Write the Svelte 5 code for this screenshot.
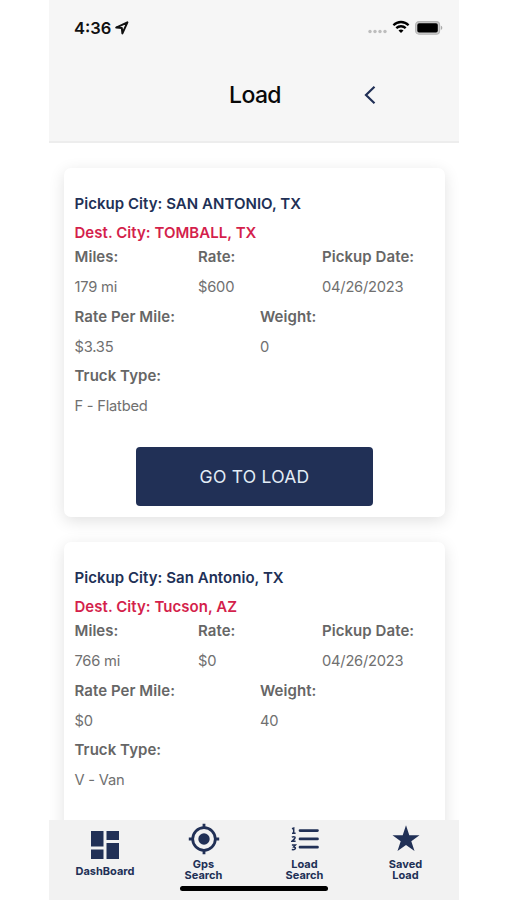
<script lang="ts">
	interface Load {
		pickup: string;
		destination: string;
		miles: string;
		rate: string;
		date: string;
		ratePerMile: string;
		weight: string;
		truck: string;
	}

	const loads: Load[] = [
		{
			pickup: 'SAN ANTONIO, TX',
			destination: 'TOMBALL, TX',
			miles: '179 mi',
			rate: '$600',
			date: '04/26/2023',
			ratePerMile: '$3.35',
			weight: '0',
			truck: 'F - Flatbed'
		},
		{
			pickup: 'San Antonio, TX',
			destination: 'Tucson, AZ',
			miles: '766 mi',
			rate: '$0',
			date: '04/26/2023',
			ratePerMile: '$0',
			weight: '40',
			truck: 'V - Van'
		}
	];
</script>

<div class="phone">
	<header>
		<div class="status-bar">
			<span class="time">4:36</span>
			<svg class="location" width="14" height="14" viewBox="0 0 14 14">
				<path d="M1.2 6.6 12.4 1.4 7.4 12.4 6.8 6.9Z" fill="none" stroke="#111" stroke-width="2" stroke-linejoin="round" />
			</svg>
			<div class="status-icons">
				<svg width="19" height="5" viewBox="0 0 19 5" fill="#bdbdbd">
					<circle cx="2" cy="2.5" r="1.7" />
					<circle cx="7" cy="2.5" r="1.7" />
					<circle cx="12" cy="2.5" r="1.7" />
					<circle cx="17" cy="2.5" r="1.7" />
				</svg>
				<svg class="wifi" width="18" height="14" viewBox="0 0 18 14">
					<path d="M1.4 5.2C5.7.9 12.3.9 16.6 5.2M4.3 8.2c2.7-2.6 6.7-2.6 9.4 0" fill="none" stroke="#000" stroke-width="2.3" />
					<path d="M9 13 6.5 10.5c1.4-1.3 3.6-1.3 5 0Z" />
				</svg>
				<svg class="battery" width="28" height="14" viewBox="0 0 28 14">
					<rect x=".6" y=".6" width="24" height="12.6" rx="3.4" fill="#ccc" stroke="#b5b5b5" stroke-width="1.1" />
					<rect x="2.3" y="2.3" width="20.5" height="9.2" rx="1.8" />
					<path d="M25.8 4.8c2 .6 2 3.6 0 4.2Z" fill="#aaa" />
				</svg>
			</div>
		</div>
		<div class="title-bar">
			<h1>Load</h1>
			<button class="back" aria-label="Back">
				<svg width="12" height="20" viewBox="0 0 12 20">
					<path d="M10.5 1.8 2 10l8.5 8.2" fill="none" stroke="#213056" stroke-width="2.2" />
				</svg>
			</button>
		</div>
	</header>

	<main>
		{#each loads as load}
			<article class="card">
				<p class="city">Pickup City: {load.pickup}</p>
				<p class="city destination">Dest. City: {load.destination}</p>
				<div class="row three">
					<div class="field"><strong>Miles:</strong><span>{load.miles}</span></div>
					<div class="field"><strong>Rate:</strong><span>{load.rate}</span></div>
					<div class="field"><strong>Pickup Date:</strong><span>{load.date}</span></div>
				</div>
				<div class="row two">
					<div class="field"><strong>Rate Per Mile:</strong><span>{load.ratePerMile}</span></div>
					<div class="field"><strong>Weight:</strong><span>{load.weight}</span></div>
				</div>
				<div class="row">
					<div class="field"><strong>Truck Type:</strong><span>{load.truck}</span></div>
				</div>
				<button class="go">GO TO LOAD</button>
			</article>
		{/each}
	</main>

	<nav>
		<div class="tabs">
			<a href="#dashboard" class="tab dashboard">
				<svg width="28" height="28" viewBox="0 0 28 28">
					<path d="M0 0h12.5v15.500H0zM15.500 0H28v9H15.500zM0 18.500h12.500V28H0zM15.500 12H28v16H15.500z" />
				</svg>
				<span>DashBoard</span>
			</a>
			<a href="#gps" class="tab">
				<svg width="32" height="32" viewBox="0 0 32 32">
					<circle cx="16" cy="16" r="11.3" fill="none" stroke="#213056" stroke-width="2.7" />
					<circle cx="16" cy="16" r="5.7" />
					<path d="M14.6.8h2.8v5h-2.8zM14.6 26.2h2.8v5h-2.8zM.8 14.6h5v2.8h-5zM26.2 14.6h5v2.8h-5z" />
				</svg>
				<span>Gps<br />Search</span>
			</a>
			<a href="#search" class="tab">
				<svg width="28" height="32" viewBox="0 0 28 32">
					<path d="M9 7.6h17.500M9 15.900h17.500M9 24.200h17.500" fill="none" stroke="#213056" stroke-width="2.7" stroke-linecap="round" />
					<path d="M1 5.700 2.700 5v5.200M1 10.200h3.600M.8 14.200q1.900-1 3.100-.2c.8 1-.6 2.300-3 4.300h3.700M.9 22h3.500l-1.700 1.900c2.800.3 2.100 3.300-1.900 2.600" fill="none" stroke="#213056" stroke-width="1.5" />
				</svg>
				<span>Load<br />Search</span>
			</a>
			<a href="#saved" class="tab">
				<svg width="28" height="32" viewBox="0 0 28 32">
					<path d="M14 2.300 17.300 12.200H27.500L19.300 18.300 22.500 28 14 22 5.500 28 8.700 18.300.5 12.200H10.700Z" />
				</svg>
				<span>Saved<br />Load</span>
			</a>
		</div>
		<div class="home-indicator"></div>
	</nav>
</div>

<style>
	:global(body) {
		background: #fff;
	}

	.phone {
		display: flex;
		flex-direction: column;
		width: 410px;
		height: 900px;
		margin-left: 49px;
		overflow: hidden;
		background: #fff;
		color: #666;
		font-family: Inter, 'Liberation Sans', sans-serif;
	}

	header {
		flex: none;
		box-sizing: border-box;
		height: 143px;
		background: #f6f6f6;
		border-bottom: 2px solid #ededed;
	}

	.status-bar {
		display: flex;
		align-items: center;
		height: 55px;
		padding: 0 16px 0 25px;
		color: #111;
	}

	.time {
		font-size: 16.5px;
		font-weight: 600;
	}

	.location {
		margin-left: 4px;
	}

	.status-icons {
		display: flex;
		align-items: center;
		margin-left: auto;
	}

	.status-icons svg:first-child {
		margin-top: 8px;
	}

	.wifi {
		margin: 0 5px;
		transform: translateY(-1px);
	}

	.title-bar {
		display: grid;
		grid-template-columns: 1fr 102px 1fr;
		align-items: center;
		height: 80px;
	}

	h1 {
		grid-column: 2;
		margin: 0 0 0 2px;
		text-align: center;
		color: #090909;
		font-size: 23px;
		font-weight: 500;
		letter-spacing: -0.6px;
	}

	button {
		padding: 0;
		border: 0;
		font: inherit;
	}

	.back {
		justify-self: start;
		height: 20px;
		margin-left: 59px;
		background: none;
	}

	.back svg {
		display: block;
	}

	main {
		flex: 1;
		min-height: 0;
		overflow: hidden;
		padding: 25px 14px 0 15px;
	}

	.card {
		box-sizing: border-box;
		height: 349px;
		margin-bottom: 25px;
		padding: 22px 10.5px 0;
		border-radius: 7px;
		background: #fff;
		box-shadow: 0 4px 16px rgba(0, 0, 0, 0.12);
	}

	p {
		margin: 0;
	}

	.city {
		height: 29px;
		line-height: 28px;
		color: #213056;
		font-size: 15px;
		font-weight: 600;
		letter-spacing: 0.04px;
	}

	.destination {
		height: 23px;
		line-height: 27px;
		color: #d41f4c;
	}

	.row {
		display: grid;
		height: 59.7px;
	}

	.three {
		grid-template-columns: 123.5px 124px 1fr;
	}

	.two {
		grid-template-columns: 185.5px 1fr;
	}

	.field {
		font-size: 15px;
		line-height: 30px;
		white-space: nowrap;
	}

	.field strong,
	.field span {
		display: block;
	}

	.field strong {
		font-weight: 600;
		letter-spacing: 0.06px;
	}

	.field span {
		color: #707070;
		font-size: 14.7px;
		letter-spacing: -0.22px;
	}

	.go {
		display: block;
		width: 237px;
		height: 59px;
		margin: 26px 0 0 61.5px;
		border-radius: 4px;
		background: #213056;
		color: #e3edf7;
		font-size: 17.5px;
		letter-spacing: 0.25px;
	}

	nav {
		position: relative;
		flex: none;
		height: 80px;
		background: #f2f2f2;
	}

	.tabs {
		display: grid;
		grid-template-columns: 97px 100px 102px 100px;
		padding: 3px 0 0 7.5px;
	}

	.tab {
		display: flex;
		flex-direction: column;
		align-items: center;
		color: #213056;
		font-size: 11px;
		font-weight: 700;
		line-height: 11px;
		text-align: center;
		text-decoration: none;
	}

	.tab svg {
		fill: #213056;
	}

	.tab span {
		margin-top: 4px;
	}

	.dashboard {
		padding-top: 8px;
	}

	.dashboard span {
		margin-top: 7px;
	}

	.home-indicator {
		position: absolute;
		left: 131px;
		bottom: 9px;
		width: 148px;
		height: 5px;
		border-radius: 3px;
		background: #000;
	}
</style>
